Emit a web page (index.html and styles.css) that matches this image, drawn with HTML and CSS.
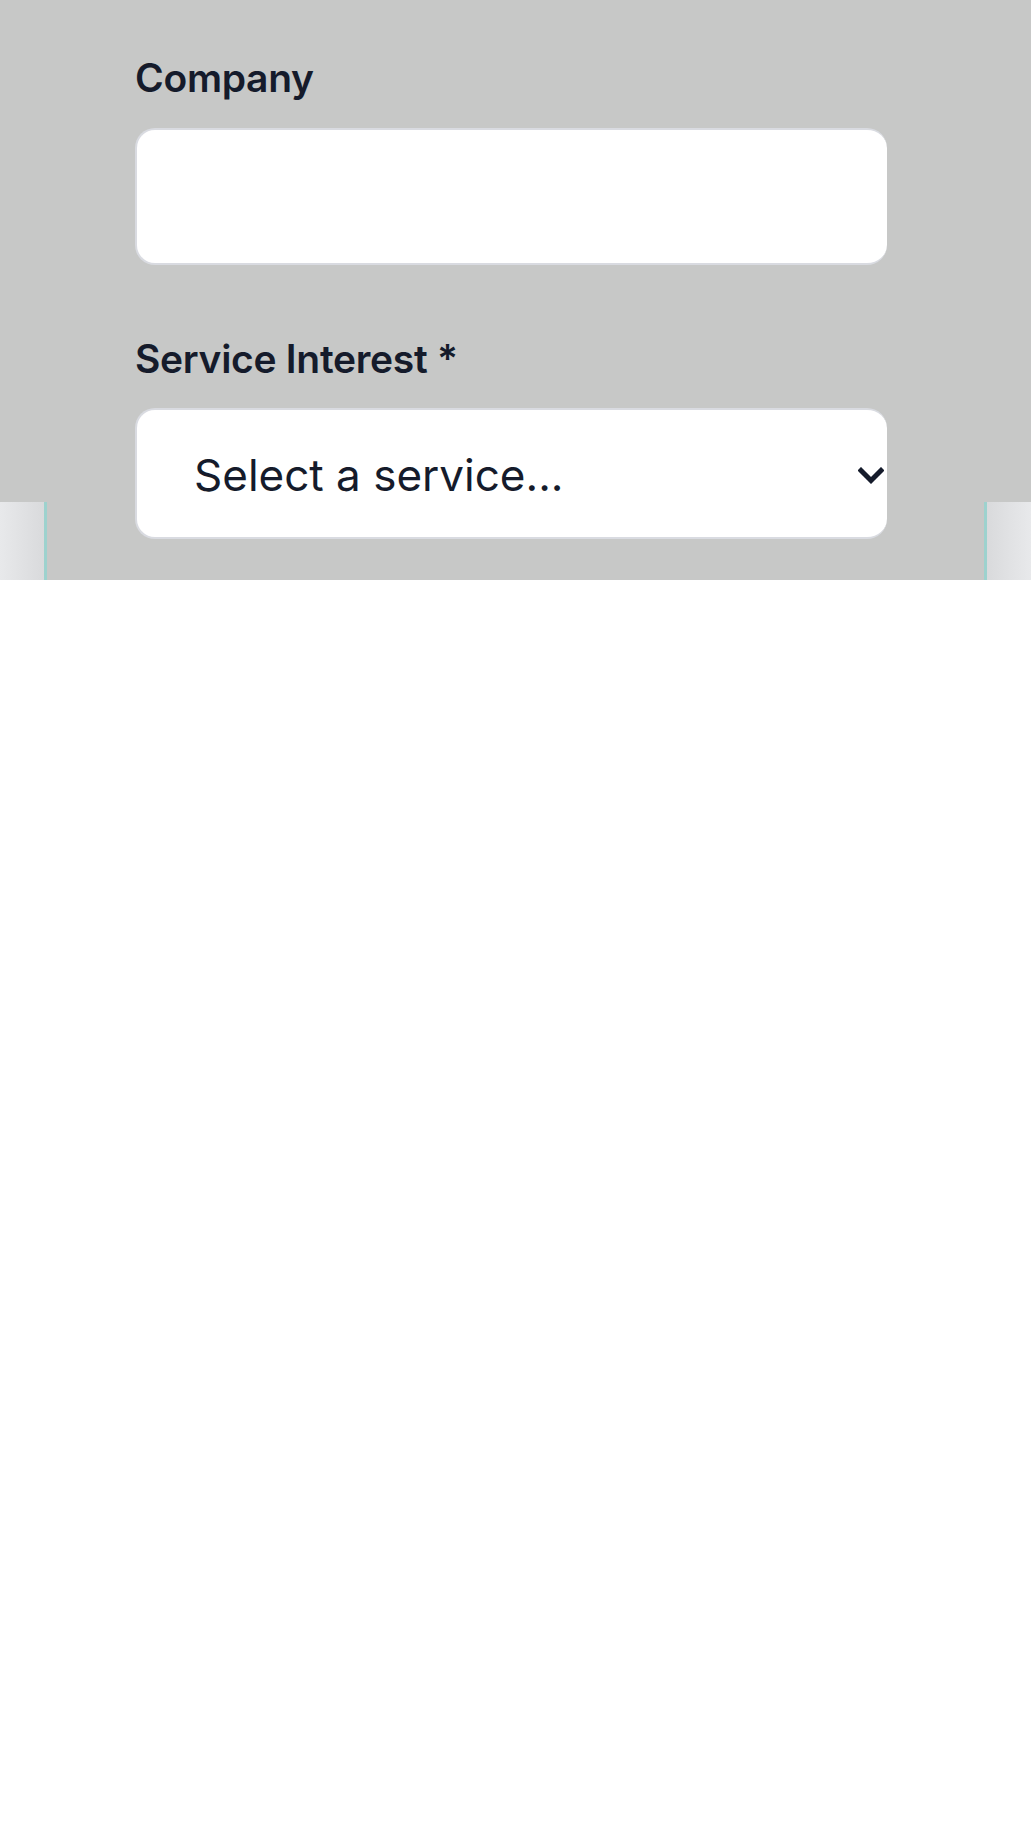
FILE: index.html
```html
<!DOCTYPE html>
<html lang="en">
<head>
<meta charset="utf-8">
<title>Contact form</title>
<link rel="stylesheet" href="styles.css">
</head>
<body>
<div class="stage">
  <form class="form">
    <div class="field field-company">
      <label class="label" for="company">Company</label>
      <input class="control input" id="company" type="text">
    </div>
    <div class="field field-service">
      <label class="label" for="service">Service Interest *</label>
      <div class="select-wrap">
        <select class="control select" id="service">
          <option>Select a service...</option>
        </select>
        <svg class="chevron" viewBox="0 0 26 18" width="26" height="18" aria-hidden="true">
          <path d="M3 3.5 L13 13.5 L23 3.5" fill="none" stroke="#151b2b" stroke-width="5" stroke-linecap="square" stroke-linejoin="miter"/>
        </svg>
      </div>
    </div>
  </form>
  <div class="strip strip-left"></div>
  <div class="strip strip-right"></div>
</div>
</body>
</html>
```

FILE: styles.css
```css
html, body {
  margin: 0;
  padding: 0;
  background: #ffffff;
}

body {
  font-family: Inter, "Noto Sans", "Liberation Sans", sans-serif;
  color: #151b2b;
}

.stage {
  position: relative;
  height: 580px;
  background: #c7c8c7;
  overflow: hidden;
}

.form {
  display: flex;
  flex-direction: column;
  padding: 55px 0 0 135px;
  width: 752px;
}

.field {
  display: flex;
  flex-direction: column;
}

.field-company {
  gap: 26px;
}

.field-service {
  margin-top: 71px;
  gap: 25px;
}

.label {
  font-size: 39px;
  font-weight: 600;
  line-height: 1.2;
  color: #151b2b;
  letter-spacing: 0;
}

.field-company .label {
  letter-spacing: -0.3px;
}

.field-service .label {
  letter-spacing: -0.3px;
}

.control {
  box-sizing: border-box;
  width: 100%;
  margin: 0;
  background: #ffffff;
  border: 2px solid #d9dbe1;
  border-right: none;
  border-radius: 20px;
  outline: none;
  font-family: Inter, "Noto Sans", "Liberation Sans", sans-serif;
  color: #151b2b;
}

.input {
  height: 137px;
}

.select-wrap {
  position: relative;
}

.select {
  height: 131px;
  appearance: none;
  -webkit-appearance: none;
  padding: 5px 60px 0 57px;
  font-size: 44px;
  font-weight: 400;
  line-height: 1.2;
}

.chevron {
  position: absolute;
  top: 59px;
  right: 3px;
  pointer-events: none;
}

.strip {
  position: absolute;
  top: 502px;
  bottom: 0;
}

.strip-left {
  left: 0;
  width: 44px;
  border-right: 3px solid #9dd2ce;
  background: linear-gradient(to right, #e8e9eb, #d9dadc);
}

.strip-right {
  left: 984px;
  right: 0;
  border-left: 3px solid #9dd2ce;
  background: linear-gradient(to right, #d9dadc, #e8e9eb);
}
```
